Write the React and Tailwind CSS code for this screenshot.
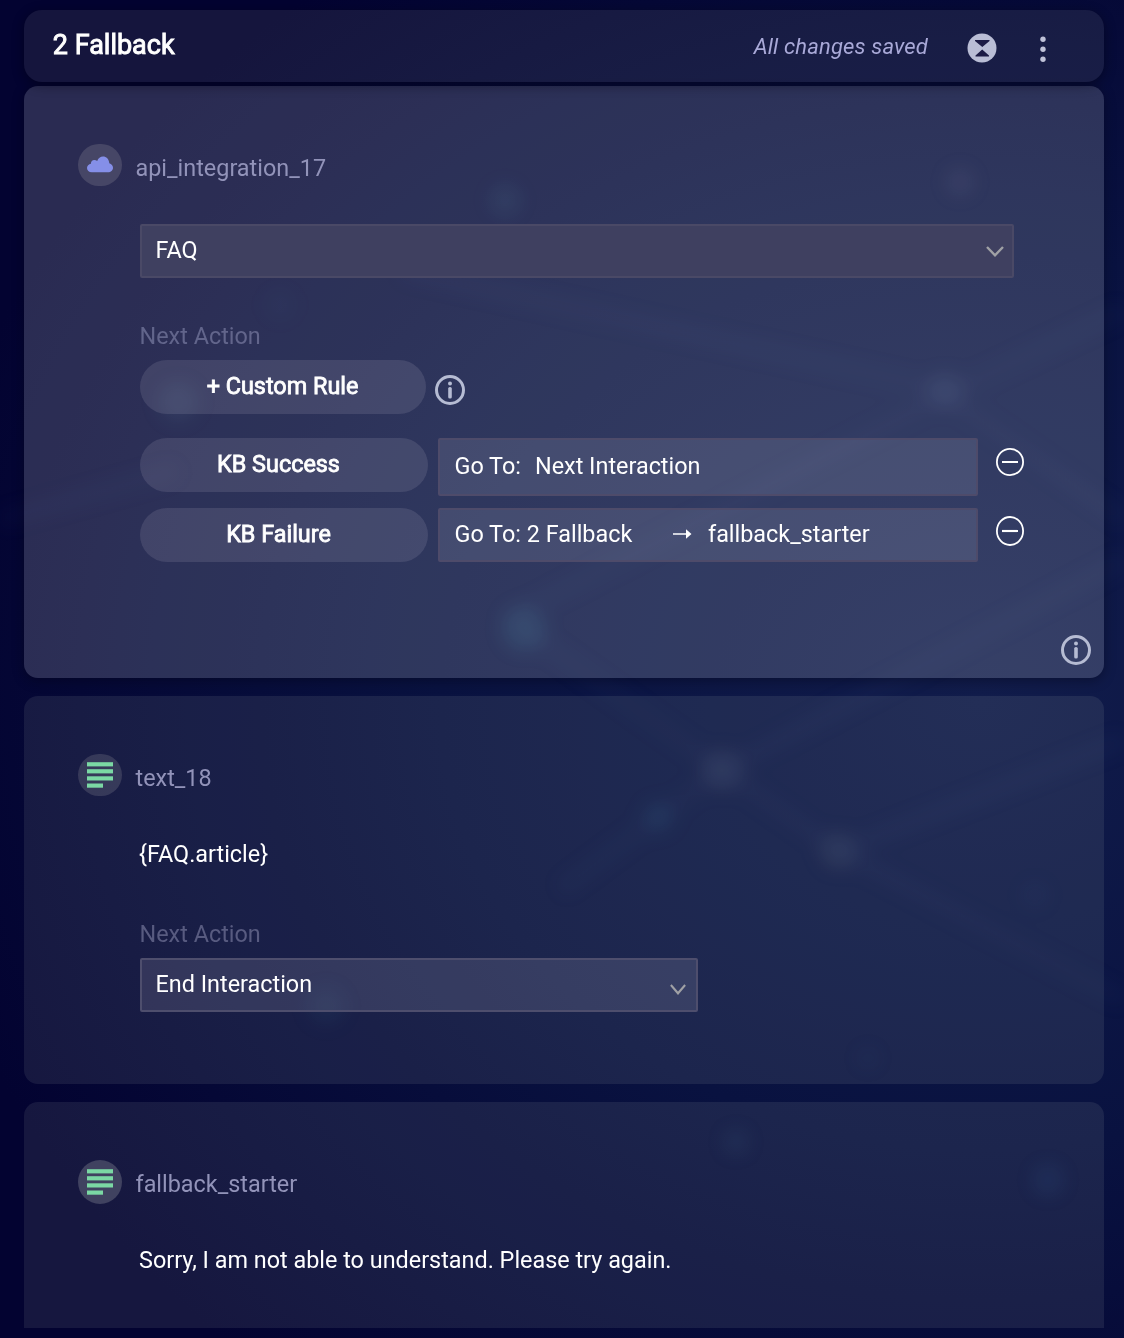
import React from "react";

const nodes = [
  [505, 200, 16, 0.1, "#3f88a8"],
  [960, 182, 14, 0.12, "#6a6a90"],
  [178, 402, 20, 0.12, "#3f7098"],
  [945, 390, 18, 0.13, "#5a7498"],
  [524, 629, 22, 0.17, "#2f80a0"],
  [722, 770, 20, 0.22, "#4a5870"],
  [658, 817, 16, 0.14, "#246090"],
  [838, 851, 18, 0.2, "#4a5870"],
  [326, 1006, 20, 0.08, "#2c6f95"],
  [736, 1142, 11, 0.2, "#2b5078"],
  [1048, 1180, 14, 0.2, "#1f4a85"],
  [280, 305, 16, 0.04, "#3f78a8"],
  [1035, 895, 13, 0.08, "#2b4a88"],
  [868, 1058, 10, 0.08, "#2b4a88"],
];

const links = [
  [0, 520, 178, 470],
  [505, 620, 945, 395],
  [945, 395, 1124, 310],
  [945, 395, 1124, 520],
  [400, 270, 945, 390],
  [524, 629, 722, 770],
  [722, 770, 838, 851],
  [838, 851, 1124, 1000],
  [838, 851, 1124, 740],
  [722, 770, 1124, 560],
  [560, 890, 722, 770],
];

function Backdrop() {
  return (
    <svg className="absolute inset-0" width="1124" height="1338" viewBox="0 0 1124 1338" aria-hidden="true">
      <defs>
        <radialGradient id="glow" gradientUnits="userSpaceOnUse" cx="0" cy="0" r="1" gradientTransform="translate(980 700) scale(1080 900)">
          <stop offset="0" stopColor="#111c4b" />
          <stop offset="0.5" stopColor="#091240" />
          <stop offset="1" stopColor="#030331" />
        </radialGradient>
        <filter id="soft" x="-20%" y="-20%" width="140%" height="140%" colorInterpolationFilters="sRGB">
          <feGaussianBlur stdDeviation="9" />
        </filter>
      </defs>
      <rect width="1124" height="1338" fill="url(#glow)" />
      <g filter="url(#soft)">
        {links.map(([x1, y1, x2, y2], i) => (
          <line key={i} x1={x1} y1={y1} x2={x2} y2={y2} stroke="#4a6098" strokeOpacity="0.05" strokeWidth="18" />
        ))}
        {nodes.map(([x, y, r, o, c], i) => (
          <circle key={i} cx={x} cy={y} r={r} fill={c} opacity={o} />
        ))}
      </g>
    </svg>
  );
}

const InfoIcon = ({ className = "" }) => (
  <svg className={className} width="30" height="30" viewBox="0 0 30 30" fill="none">
    <circle cx="15" cy="15" r="13.5" stroke="#b6bcd3" strokeWidth="3" />
    <circle cx="15" cy="8.6" r="2" fill="#b6bcd3" />
    <rect x="13.2" y="12" width="3.6" height="11.6" rx="1.6" fill="#b6bcd3" />
  </svg>
);

const MinusIcon = ({ tall }) => (
  <svg width="28" height={tall ? 30 : 28} viewBox="0 0 28 28" preserveAspectRatio="none" fill="none" stroke="#fff" strokeWidth="1.8">
    <circle cx="14" cy="14" r="13.1" />
    <path d="M6 14h16" strokeWidth="2" />
  </svg>
);

const Cloud = () => (
  <svg className="mb-[2px]" width="26" height="17" viewBox="0 0 26 17" fill="#858fe8">
    <path d="M4.600 16.300C2 16.300 0 14.400 0 12c0-2.200 1.700-3.900 3.900-4.200C3.900 5.500 5.200 4 7.300 4c1.200 0 2.200.3 2.900.9C11.300 2.300 13.400.600 16 .600c3.300 0 6.100 2.700 6.300 6.700C24.500 8 26 9.700 26 11.800c0 2.600-2.100 4.500-5.100 4.500z" />
  </svg>
);

const TextLines = () => (
  <svg width="26" height="26" viewBox="0 0 26 26" fill="#7bd8a4">
    <rect y="0.200" width="26" height="4.200" />
    <rect y="7.200" width="26" height="4.200" />
    <rect y="14.300" width="26" height="4.200" />
    <rect y="21.500" width="16" height="4.200" />
  </svg>
);

const Chevron = ({ className = "", w = 18, h = 11 }) => (
  <svg className={className} width={w} height={h} viewBox="0 0 18 11" preserveAspectRatio="none" fill="none" stroke="#a0a1a5" strokeWidth="2.400">
    <path d="M1 1l8 8.300L17 1" />
  </svg>
);

const Arrow = () => (
  <svg width="19" height="10" viewBox="0 0 19 10" fill="#fff">
    <path d="M0 4.200h13V.3L18.500 5 13 9.700V5.800H0z" />
  </svg>
);

function StepHeader({ icon, label, round }) {
  return (
    <div className="flex h-[102px] items-start pl-[54px] pt-[58px]">
      <div className={round ? "flex h-11 w-11 items-center justify-center rounded-full bg-[#404260]" : "flex h-[42px] w-11 items-center justify-center rounded-[21px] bg-[#fffae8]/[0.135]"}>
        {icon}
      </div>
      <span className="ml-[13.500px] mt-[10px] text-[#9293b9]">{label}</span>
    </div>
  );
}

const Pill = ({ children, className }) => (
  <button className={"h-[54px] rounded-full bg-[#f4f0f4]/[0.11] pb-[2px] text-center [-webkit-text-stroke:0.8px_white] " + className}>
    {children}
  </button>
);

export default function App() {
  return (
    <div className="relative h-[1338px] w-[1124px] overflow-hidden bg-[#02022e] font-['Roboto',sans-serif] text-[23.400px] leading-7 text-white">
      <Backdrop />
      <main className="relative flex flex-col pl-[24px] pr-[20px] pt-[10px]">
        <header className="z-10 flex h-[72px] items-start rounded-[18px] bg-[#e0dcc4]/[0.085] pl-[28.800px] shadow-[0_3px_12px_rgba(0,0,15,0.45)]">
          <h1 className="mt-[19px] text-[27px] leading-8 [-webkit-text-stroke:0.9px_white]">2 Fallback</h1>
          <div className="ml-auto flex items-start">
            <span className="mt-[23px] text-[22px] italic tracking-[0.150px] text-[#a9a9d8]">All changes saved</span>
            <svg className="ml-[39px] mt-[23px]" width="30" height="30" viewBox="0 0 30 30">
              <circle cx="15" cy="15" r="14.500" fill="#b9bdd5" />
              <path d="M8 7h14.500v1L15.300 14 8 8zM15.200 16.600L22 22.500v1H8.500v-1z" fill="#1c1b45" />
            </svg>
            <svg className="ml-[43px] mr-[58px] mt-[26px]" width="6" height="26" viewBox="0 0 6 26" fill="#bfc2d8">
              <circle cx="3" cy="3.200" r="2.700" />
              <circle cx="3" cy="13.200" r="2.700" />
              <circle cx="3" cy="23.200" r="2.700" />
            </svg>
          </div>
        </header>

        <section className="relative mt-1 h-[592px] rounded-[14px] bg-[#e2e8ee]/[0.175] shadow-[0_3px_12px_rgba(0,0,15,0.35)]">
          <StepHeader icon={<Cloud />} label="api_integration_17" />
          <div className="ml-[116px] mt-[36px] flex h-[54px] w-[874px] items-center justify-between rounded-[2px] border-2 border-[#4a4966] bg-[#3f4060] pb-[2px] pl-[13.500px] pr-[8px]">
            <span>FAQ</span>
            <Chevron className="mt-[2px]" />
          </div>
          <div className="ml-[115.500px] mt-[44px] text-[#62658b]">Next Action</div>
          <div className="ml-[116px] mt-[10px] flex">
            <Pill className="w-[286px] pr-[1px]">+ Custom Rule</Pill>
            <InfoIcon className="ml-[9px] mt-[15px]" />
          </div>
          <div className="ml-[116px] mt-6 flex items-start">
            <Pill className="w-[288px] pr-[11px]">KB Success</Pill>
            <div className="ml-[10px] flex h-[58px] w-[540px] items-center rounded-[2px] border-2 border-[#4e4b6a] bg-[#f6f2ff]/[0.11] pb-[2px] pl-[14.500px]">
              <span>Go To:</span>
              <span className="ml-[14px]">Next Interaction</span>
            </div>
            <div className="ml-[18px] mt-[10px]"><MinusIcon /></div>
          </div>
          <div className="ml-[116px] mt-3 flex items-start">
            <Pill className="w-[288px] pr-[11px]">KB Failure</Pill>
            <div className="ml-[10px] flex h-[54px] w-[540px] items-center rounded-[2px] border-2 border-[#4e4b6a] bg-[#f6f2ff]/[0.11] pb-[2px] pl-[14.500px]">
              <span className="w-[218px]">Go To: 2 Fallback</span>
              <Arrow />
              <span className="ml-[16.500px]">fallback_starter</span>
            </div>
            <div className="ml-[18px] mt-[8px]"><MinusIcon tall /></div>
          </div>
          <InfoIcon className="absolute bottom-[13px] right-[13px]" />
        </section>

        <section className="mt-[18px] h-[388px] rounded-[14px] bg-[#ecf0dd]/[0.088]">
          <StepHeader icon={<TextLines />} label="text_18" />
          <p className="ml-[115px] mt-[42px]">{"{FAQ.article}"}</p>
          <div className="ml-[115.500px] mt-[52px] text-[#585b80]">Next Action</div>
          <div className="ml-[116px] mt-[10px] flex h-[54px] w-[558px] items-center justify-between rounded-[2px] border-2 border-[#4e4e6d] bg-[#f8f2ff]/[0.12] pb-[2px] pl-[13.500px] pr-[10px]">
            <span>End Interaction</span>
            <Chevron className="mt-[10px]" w={16} h={11} />
          </div>
        </section>

        <section className="mt-[18px] h-[226px] rounded-t-[14px] bg-[#ecf0dd]/[0.088]">
          <StepHeader icon={<TextLines />} label="fallback_starter" round />
          <p className="ml-[115px] mt-[42px]">Sorry, I am not able to understand. Please try again.</p>
        </section>
      </main>
    </div>
  );
}
